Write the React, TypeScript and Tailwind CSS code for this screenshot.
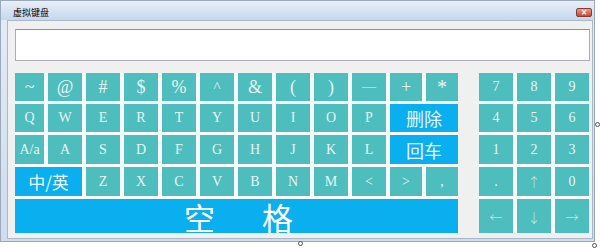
import React from "react";

const TEAL = "bg-[#4dbdbd]";
const BLUE = "bg-[#0aafef]";

type K = { t: string; span?: number; blue?: boolean; cls?: string };

const rows: K[][] = [
  [
    { t: "~", cls: "text-[18px]" },
    { t: "@", cls: "text-[18px]" },
    { t: "#", cls: "text-[18px]" },
    { t: "$", cls: "text-[18px]" },
    { t: "%", cls: "text-[18px]" },
    { t: "^", cls: "text-[15px]" },
    { t: "&", cls: "text-[18px]" },
    { t: "(", cls: "text-[18px]" },
    { t: ")", cls: "text-[18px]" },
    { t: "—", cls: "text-[12px]" },
    { t: "+", cls: "text-[18px]" },
    { t: "*", cls: "text-[20px]" },
  ],
  [
    { t: "Q" }, { t: "W" }, { t: "E" }, { t: "R" }, { t: "T" }, { t: "Y" },
    { t: "U" }, { t: "I" }, { t: "O" }, { t: "P" },
    { t: "删除", span: 2, blue: true, cls: "cjk text-[18px]" },
  ],
  [
    { t: "A/a" }, { t: "A" }, { t: "S" }, { t: "D" }, { t: "F" }, { t: "G" },
    { t: "H" }, { t: "J" }, { t: "K" }, { t: "L" },
    { t: "回车", span: 2, blue: true, cls: "cjk text-[18px]" },
  ],
  [
    { t: "中/英", span: 2, blue: true, cls: "cjk text-[17px]" },
    { t: "Z" }, { t: "X" }, { t: "C" }, { t: "V" }, { t: "B" }, { t: "N" },
    { t: "M" }, { t: "<" }, { t: ">" }, { t: "," },
  ],
];

const num: string[][] = [
  ["7", "8", "9"],
  ["4", "5", "6"],
  ["1", "2", "3"],
  [".", "↑", "0"],
  ["←", "↓", "→"],
];

const ARROWS = "←↑↓→";

function Key({ k }: { k: K }) {
  const isCjk = k.cls?.includes("cjk");
  return (
    <div
      className={`${k.blue ? BLUE : TEAL} flex items-center justify-center text-[#e6f6f6] leading-none ${
        k.span === 2 ? "col-span-2" : ""
      } ${isCjk ? "font-['Noto_Sans_CJK_SC',sans-serif]" : "font-['Liberation_Serif',serif] text-[14px]"} ${
        k.cls ? k.cls.replace("cjk", "") : ""
      }`}
    >
      {k.t}
    </div>
  );
}

function Handle({ className }: { className: string }) {
  return (
    <div
      className={`absolute w-[5px] h-[5px] rounded-full border border-[#555] bg-white ${className}`}
    />
  );
}

export default function App() {
  return (
    <div className="relative w-[600px] h-[249px] bg-white overflow-hidden">
      <div className="w-[595px] h-[242px] flex flex-col bg-gradient-to-b from-[#e4ecf7] to-[#cfdcec] border border-[#9aa9bc]">
        <div className="h-[19px] flex items-center justify-between pl-[12px] pr-[2px] bg-gradient-to-b from-[#e8eff9] to-[#c6d7ec]">
          <span className="text-[9px] text-black font-['Noto_Sans_CJK_SC',sans-serif] leading-none mt-[3px]">
            虚拟键盘
          </span>
          <div className="w-[16px] h-[9px] mt-[4px] rounded-[2px] bg-gradient-to-b from-[#e59a8f] to-[#c4473a] border border-[#8c3b33] flex items-center justify-center text-white text-[8px] leading-none font-bold font-['DejaVu_Sans',sans-serif]">
            ×
          </div>
        </div>
        <div className="flex-1 ml-[6px] mr-[1px] mb-[2px] bg-[#f0f0f0] border border-[#a9b8ca] flex flex-col pl-[7px] pt-[8px]">
          <div className="w-[575px] h-[32px] bg-white border border-[#abadb3] border-t-[#8f9299]" />
          <div className="flex mt-[12px]">
            <div className="grid grid-cols-[29px_34px_34px_34px_34px_34px_34px_34px_34px_34px_32px_32px] grid-rows-[28px_28px_29px_29px_34px] gap-x-[4px] gap-y-[3px] bg-[#f8fcfc]">
              {rows.map((r, i) => r.map((k, j) => <Key key={`${i}-${j}`} k={k} />))}
              <div className={`col-span-12 ${BLUE} flex items-center justify-center gap-[47px] text-white text-[31px] leading-none font-['Noto_Sans_CJK_SC',sans-serif]`}>
                <span className="ml-[4px]">空</span>
                <span>格</span>
              </div>
            </div>
            <div className="ml-[21px] grid grid-cols-[34px_34px_34px] grid-rows-[28px_28px_29px_29px_34px] gap-x-[4px] gap-y-[3px] bg-[#f8fcfc]">
              {num.map((r, i) =>
                r.map((t, j) => (
                  <div
                    key={`n${i}-${j}`}
                    className={`${TEAL} flex items-center justify-center text-[#e6f6f6] leading-none ${
                      ARROWS.includes(t)
                        ? "text-[13px] font-['Noto_Sans_CJK_SC',sans-serif] font-thin"
                        : "text-[14px] font-['Liberation_Serif',serif]"
                    }`}
                  >
                    {t}
                  </div>
                ))
              )}
            </div>
          </div>
        </div>
      </div>
      <Handle className="left-[298px] top-[241px]" />
      <Handle className="left-[595px] top-[122px]" />
      <Handle className="left-[592px] top-[243px]" />
    </div>
  );
}
